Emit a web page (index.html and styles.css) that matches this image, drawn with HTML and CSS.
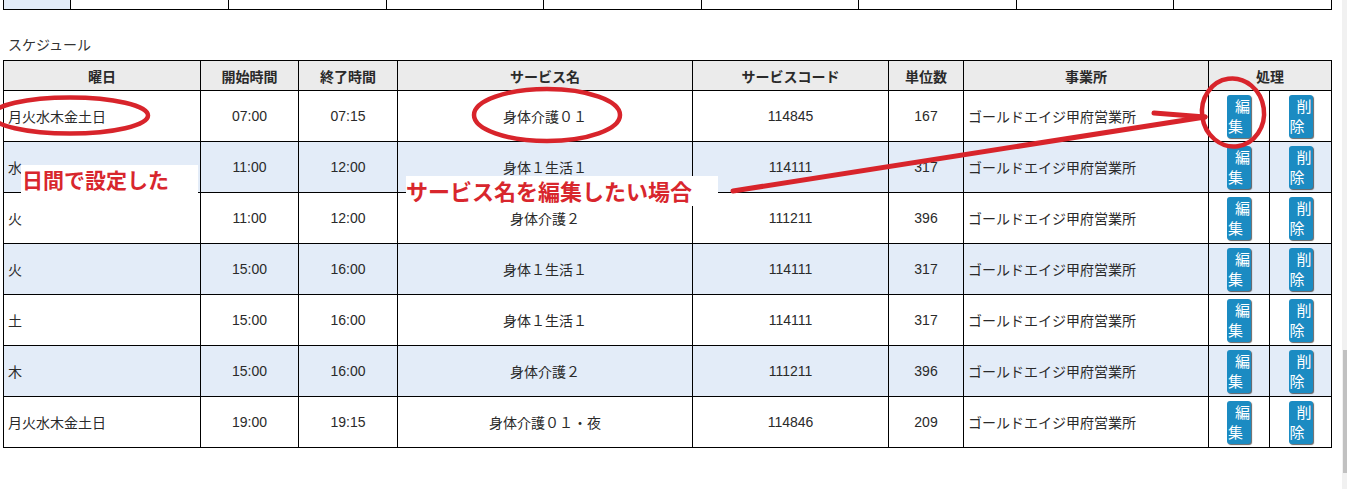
FILE: index.html
```html
<!DOCTYPE html>
<html lang="ja">
<head>
<meta charset="utf-8">
<title>スケジュール</title>
<link rel="stylesheet" href="styles.css">
</head>
<body>
<div class="page">
  <table class="prev">
    <colgroup>
      <col class="p0"><col class="p1"><col class="p1"><col class="p2"><col class="p1"><col class="p2"><col class="p1"><col class="p2"><col class="p1">
    </colgroup>
    <tr><td class="alt"></td><td></td><td></td><td></td><td></td><td></td><td></td><td></td><td></td></tr>
  </table>

  <div class="caption">スケジュール</div>

  <table class="sched">
    <colgroup>
      <col class="c-day"><col class="c-start"><col class="c-end"><col class="c-name"><col class="c-code"><col class="c-unit"><col class="c-office"><col class="c-edit"><col class="c-del">
    </colgroup>
    <tr class="head">
      <th>曜日</th><th>開始時間</th><th>終了時間</th><th>サービス名</th><th>サービスコード</th><th>単位数</th><th>事業所</th><th colspan="2">処理</th>
    </tr>
    <tr>
      <td class="l">月火水木金土日</td><td>07:00</td><td>07:15</td><td>身体介護０１</td><td>114845</td><td>167</td><td class="l">ゴールドエイジ甲府営業所</td>
      <td><span class="btn"><span class="a">編</span><span class="b">集</span></span></td>
      <td><span class="btn"><span class="a">削</span><span class="b">除</span></span></td>
    </tr>
    <tr class="alt">
      <td class="l">水</td><td>11:00</td><td>12:00</td><td>身体１生活１</td><td>114111</td><td>317</td><td class="l">ゴールドエイジ甲府営業所</td>
      <td><span class="btn"><span class="a">編</span><span class="b">集</span></span></td>
      <td><span class="btn"><span class="a">削</span><span class="b">除</span></span></td>
    </tr>
    <tr>
      <td class="l">火</td><td>11:00</td><td>12:00</td><td>身体介護２</td><td>111211</td><td>396</td><td class="l">ゴールドエイジ甲府営業所</td>
      <td><span class="btn"><span class="a">編</span><span class="b">集</span></span></td>
      <td><span class="btn"><span class="a">削</span><span class="b">除</span></span></td>
    </tr>
    <tr class="alt">
      <td class="l">火</td><td>15:00</td><td>16:00</td><td>身体１生活１</td><td>114111</td><td>317</td><td class="l">ゴールドエイジ甲府営業所</td>
      <td><span class="btn"><span class="a">編</span><span class="b">集</span></span></td>
      <td><span class="btn"><span class="a">削</span><span class="b">除</span></span></td>
    </tr>
    <tr>
      <td class="l">土</td><td>15:00</td><td>16:00</td><td>身体１生活１</td><td>114111</td><td>317</td><td class="l">ゴールドエイジ甲府営業所</td>
      <td><span class="btn"><span class="a">編</span><span class="b">集</span></span></td>
      <td><span class="btn"><span class="a">削</span><span class="b">除</span></span></td>
    </tr>
    <tr class="alt">
      <td class="l">木</td><td>15:00</td><td>16:00</td><td>身体介護２</td><td>111211</td><td>396</td><td class="l">ゴールドエイジ甲府営業所</td>
      <td><span class="btn"><span class="a">編</span><span class="b">集</span></span></td>
      <td><span class="btn"><span class="a">削</span><span class="b">除</span></span></td>
    </tr>
    <tr>
      <td class="l">月火水木金土日</td><td>19:00</td><td>19:15</td><td>身体介護０１・夜</td><td>114846</td><td>209</td><td class="l">ゴールドエイジ甲府営業所</td>
      <td><span class="btn"><span class="a">編</span><span class="b">集</span></span></td>
      <td><span class="btn"><span class="a">削</span><span class="b">除</span></span></td>
    </tr>
  </table>

  <svg class="marks" width="1347" height="489" viewBox="0 0 1347 489">
    <g fill="none" stroke="#d8242b" stroke-width="4.5" stroke-linecap="round">
      <ellipse cx="70" cy="115.5" rx="78" ry="18"/>
      <ellipse cx="547" cy="115" rx="73" ry="26"/>
      <ellipse cx="1233" cy="112.5" rx="31" ry="34" transform="rotate(-8 1233 112.5)"/>
      <line x1="733" y1="191" x2="1205" y2="117" stroke-width="5"/>
      <line x1="1154" y1="113" x2="1205" y2="117" stroke-width="5"/>
    </g>
  </svg>
  <div class="note note1">日間で設定した</div>
  <div class="note note2">サービス名を編集したい場合</div>

  <div class="scrollbar"><div class="thumb"></div></div>
</div>
</body>
</html>
```

FILE: styles.css
```css
html, body {
  margin: 0;
  padding: 0;
  background: #fff;
}
body {
  font-family: "Liberation Sans", "Noto Sans CJK JP", sans-serif;
  font-size: 14px;
  color: #2a2a2a;
  width: 1347px;
  height: 489px;
  overflow: hidden;
}
.page {
  position: relative;
  padding-left: 3px;
  height: 489px;
}
table {
  border-collapse: collapse;
  table-layout: fixed;
  width: 1329px;
}
.p0 { width: 67px; }
.p1 { width: 158px; }
.p2 { width: 157px; }
.c-day { width: 197px; }
.c-start { width: 98px; }
.c-end { width: 99px; }
.c-name { width: 295px; }
.c-code { width: 196px; }
.c-unit { width: 75px; }
.c-office { width: 245px; }
.c-edit { width: 61px; }
.c-del { width: 62px; }
.prev td {
  height: 9px;
  padding: 0;
  border: 1px solid #000;
  border-top: none;
}
.prev td.alt {
  background: #e3ecf8;
}
.caption {
  margin-top: 25px;
  margin-left: 5px;
  height: 20px;
  line-height: 20px;
  margin-bottom: 5px;
  color: #333;
}
.sched th,
.sched td {
  border: 1px solid #000;
  padding: 0;
  text-align: center;
  vertical-align: middle;
}
.sched tr.head {
  height: 30px;
}
.sched th {
  background: #ebebeb;
  font-weight: bold;
}
.sched tr {
  height: 51px;
}
.sched tr.alt td {
  background: #e3ecf8;
}
.sched td.l {
  text-align: left;
  padding-left: 4px;
}
.btn {
  display: inline-block;
  vertical-align: middle;
  width: 24px;
  height: 43px;
  box-sizing: border-box;
  padding: 1px 1px;
  background: #1b8bc2;
  color: #fff;
  border-radius: 3px;
  box-shadow: 1px 1px 1px rgba(0, 0, 0, 0.6);
  font-family: "Noto Sans CJK JP", sans-serif;
  font-size: 15px;
  line-height: 20px;
}
.btn .a,
.btn .b {
  display: block;
}
.btn .a {
  text-align: right;
}
.btn .b {
  text-align: left;
}
.marks {
  position: absolute;
  left: 0;
  top: 0;
  pointer-events: none;
  z-index: 2;
}
.note {
  position: absolute;
  z-index: 1;
  background: #fff;
  color: #d8262d;
  font-family: "Noto Sans CJK JP", sans-serif;
  font-weight: bold;
  white-space: nowrap;
}
.note1 {
  left: 21px;
  top: 165px;
  width: 177px;
  height: 29px;
  line-height: 28px;
  font-size: 21px;
  padding-left: 1px;
  box-sizing: border-box;
}
.note2 {
  left: 406px;
  top: 176px;
  width: 312px;
  height: 30px;
  line-height: 28px;
  font-size: 22px;
}
.scrollbar {
  position: absolute;
  right: 0;
  top: 0;
  width: 5px;
  height: 489px;
  background: #f1f1f1;
}
.thumb {
  margin-top: 350px;
  margin-left: 1px;
  width: 4px;
  height: 123px;
  background: #c1c1c1;
}
```
